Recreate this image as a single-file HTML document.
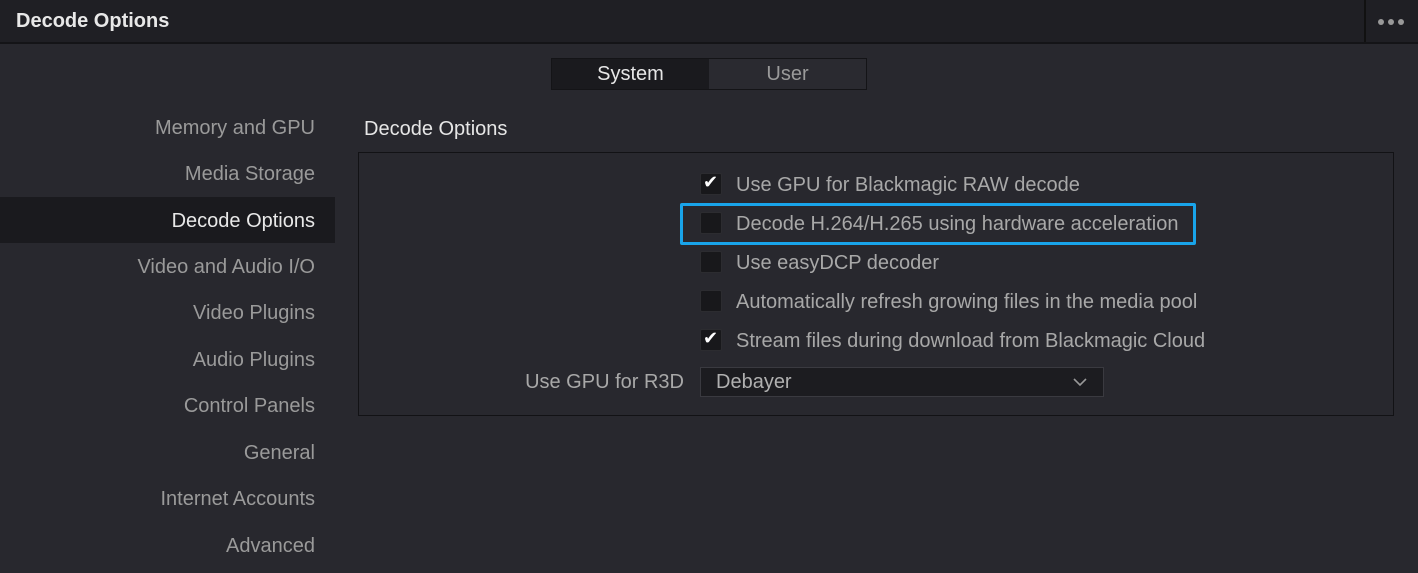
<!DOCTYPE html>
<html><head><style>
body{margin:0;width:1418px;height:573px;background:#28282e;font-family:"Liberation Sans",sans-serif;position:relative;overflow:hidden;color:#a8a8a8}
.a{position:absolute}
.hdr{left:0;top:0;width:1418px;height:42px;background:#1f1f24;border-bottom:2px solid #141417}
.side{right:1103px;font-size:20px;color:#9a9a9a;text-align:right;white-space:nowrap;line-height:24px}
.cb{left:700px;width:20px;height:20px;background:#18181b;border:1px solid #2c2c30;border-radius:2px}
.lbl{left:736px;font-size:20px;color:#a8a8a8;line-height:24px;white-space:nowrap}
</style></head><body>
<div class="a hdr"></div>
<div class="a" style="left:16px;top:10px;font-size:20px;font-weight:bold;color:#e8e8e8">Decode Options</div>
<div class="a" style="left:1364px;top:0;width:2px;height:42px;background:#111"></div>
<div class="a" style="left:1378px;top:19px;width:6px;height:6px;border-radius:50%;background:#999"></div>
<div class="a" style="left:1388px;top:19px;width:6px;height:6px;border-radius:50%;background:#999"></div>
<div class="a" style="left:1398px;top:19px;width:6px;height:6px;border-radius:50%;background:#999"></div>

<div class="a" style="left:551px;top:58px;width:314px;height:30px;border:1px solid #141417;background:#2a2a30"></div>
<div class="a" style="left:552px;top:59px;width:157px;height:30px;background:#1a1a1e"></div>
<div class="a" style="left:552px;top:63px;width:157px;text-align:center;font-size:20px;color:#e6e6e6">System</div>
<div class="a" style="left:709px;top:63px;width:157px;text-align:center;font-size:20px;color:#9a9a9a">User</div>

<div class="a" style="left:0;top:197px;width:335px;height:46px;background:#1a1a1e"></div>
<div class="a side" style="top:116px">Memory and GPU</div>
<div class="a side" style="top:162px">Media Storage</div>
<div class="a side" style="top:209px;color:#e8e8e8">Decode Options</div>
<div class="a side" style="top:255px">Video and Audio I/O</div>
<div class="a side" style="top:301px">Video Plugins</div>
<div class="a side" style="top:348px">Audio Plugins</div>
<div class="a side" style="top:394px">Control Panels</div>
<div class="a side" style="top:441px">General</div>
<div class="a side" style="top:487px">Internet Accounts</div>
<div class="a side" style="top:534px">Advanced</div>

<div class="a" style="left:364px;top:118px;font-size:20px;color:#e6e6e6">Decode Options</div>
<div class="a" style="left:358px;top:152px;width:1034px;height:262px;border:1px solid #121215;background:#28282e"></div>

<div class="a" style="left:680px;top:203px;width:510px;height:36px;border:3px solid #19a4ea;border-radius:2px"></div>

<div class="a cb" style="top:173px"></div><div class="a" style="left:703px;top:172px;font-size:18px;color:#fff">✔</div>
<div class="a lbl" style="top:173px">Use GPU for Blackmagic RAW decode</div>
<div class="a cb" style="top:212px"></div>
<div class="a lbl" style="top:212px">Decode H.264/H.265 using hardware acceleration</div>
<div class="a cb" style="top:251px"></div>
<div class="a lbl" style="top:251px">Use easyDCP decoder</div>
<div class="a cb" style="top:290px"></div>
<div class="a lbl" style="top:290px">Automatically refresh growing files in the media pool</div>
<div class="a cb" style="top:329px"></div><div class="a" style="left:703px;top:328px;font-size:18px;color:#fff">✔</div>
<div class="a lbl" style="top:329px">Stream files during download from Blackmagic Cloud</div>

<div class="a" style="right:734px;top:371px;font-size:20px;color:#a8a8a8;white-space:nowrap">Use GPU for R3D</div>
<div class="a" style="left:700px;top:367px;width:402px;height:28px;background:#1c1c20;border:1px solid #3a3a40"></div>
<div class="a" style="left:716px;top:371px;font-size:20px;color:#b0b0b0">Debayer</div>
<svg class="a" style="left:1073px;top:377px" width="14" height="10"><path d="M1 2 L7 8 L13 2" fill="none" stroke="#999" stroke-width="1.6"/></svg>
</body></html>
